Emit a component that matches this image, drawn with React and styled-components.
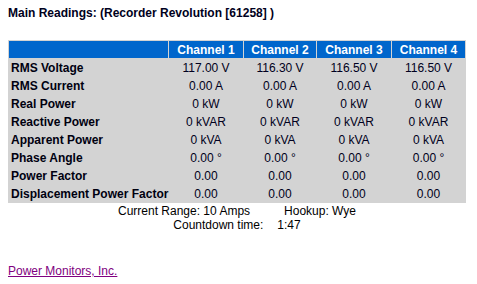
import React from 'react';
import styled, { createGlobalStyle } from 'styled-components';

const GlobalStyle = createGlobalStyle`
	body {
		margin: 8px;
		background: #ffffff;
		font-family: 'Liberation Sans', Arial, sans-serif;
		font-size: 12px;
		color: #000000;
	}
`;

const Title = styled.div`
	font-weight: bold;
	font-size: 12px;
	line-height: 14px;
	margin-top: -2px;
	margin-bottom: 20px;
	color: #000020;
`;

const Readings = styled.table`
	width: 458px;
	table-layout: fixed;
	border-collapse: separate;
	border-spacing: 1px;
	background: #d3d3d3;
	font-size: 12px;
`;

const HeadCell = styled.th`
	background: #0066cc;
	color: #ffffff;
	font-weight: bold;
	height: 17px;
	padding: 0;
	text-align: center;
	white-space: nowrap;
	width: ${(p) => p.w}px;
`;

const Label = styled.td`
	font-weight: bold;
	height: 17px;
	padding: 0 0 0 2px;
	text-align: left;
	white-space: nowrap;
	color: #000010;
`;

const Value = styled.td`
	height: 17px;
	padding: 0;
	text-align: center;
	white-space: nowrap;
	color: #000020;
`;

const Footer = styled.div`
	width: 458px;
	margin-top: 1px;
	display: flex;
	flex-direction: column;
	align-items: center;
	line-height: 14px;
`;

const FooterRow = styled.div`
	display: flex;
	gap: ${(p) => p.gap}px;
`;

const Company = styled.a`
	display: inline-block;
	margin-top: 32px;
	color: #800080;
	text-decoration: underline;
	font-size: 12px;
`;

const rows = [
	['RMS Voltage', '117.00 V', '116.30 V', '116.50 V', '116.50 V'],
	['RMS Current', '0.00 A', '0.00 A', '0.00 A', '0.00 A'],
	['Real Power', '0 kW', '0 kW', '0 kW', '0 kW'],
	['Reactive Power', '0 kVAR', '0 kVAR', '0 kVAR', '0 kVAR'],
	['Apparent Power', '0 kVA', '0 kVA', '0 kVA', '0 kVA'],
	['Phase Angle', '0.00 °', '0.00 °', '0.00 °', '0.00 °'],
	['Power Factor', '0.00', '0.00', '0.00', '0.00'],
	['Displacement Power Factor', '0.00', '0.00', '0.00', '0.00'],
];

export default function App() {
	return (
		<>
			<GlobalStyle />
			<Title>Main Readings: (Recorder Revolution [61258] )</Title>
			<Readings>
				<thead>
					<tr>
						<HeadCell w={159}></HeadCell>
						<HeadCell w={74}>Channel 1</HeadCell>
						<HeadCell w={72}>Channel 2</HeadCell>
						<HeadCell w={74}>Channel 3</HeadCell>
						<HeadCell w={73}>Channel 4</HeadCell>
					</tr>
				</thead>
				<tbody>
					{rows.map((r) => (
						<tr key={r[0]}>
							<Label>{r[0]}</Label>
							{r.slice(1).map((v, i) => (
								<Value key={i}>{v}</Value>
							))}
						</tr>
					))}
				</tbody>
			</Readings>
			<Footer>
				<FooterRow gap={34}>
					<span>Current Range: 10 Amps</span>
					<span>Hookup: Wye</span>
				</FooterRow>
				<FooterRow gap={14}>
					<span>Countdown time:</span>
					<span>1:47</span>
				</FooterRow>
			</Footer>
			<Company href="#">Power Monitors, Inc.</Company>
		</>
	);
}
